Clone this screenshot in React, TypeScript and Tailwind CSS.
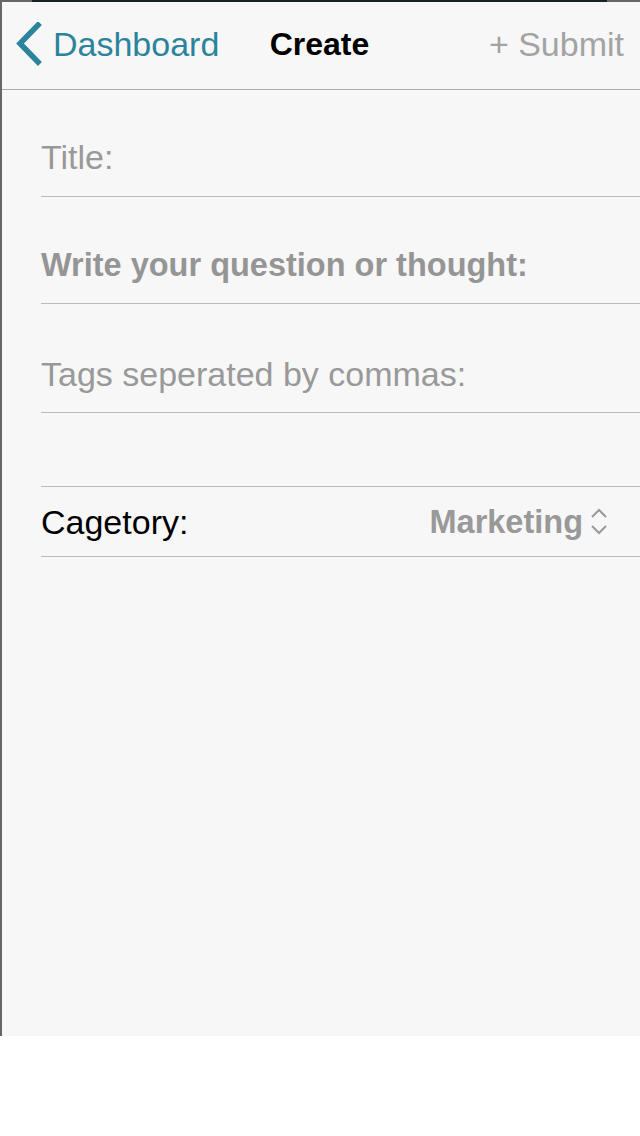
import { Fragment } from 'react';

const font = { fontFamily: '"Liberation Sans", Arial, sans-serif' };

function BackChevron() {
    return (
        <svg width="28" height="44" viewBox="0 0 28 44" className="shrink-0">
            <polyline points="23,3 5,21.5 23,40" fill="none" stroke="#2b849b" strokeWidth="5.5" strokeLinecap="square" />
        </svg>
    );
}

function UpDown() {
    return (
        <svg width="18" height="30" viewBox="0 0 18 30" className="ml-[7px] shrink-0">
            <polyline points="2,10 9,3 16,10" fill="none" stroke="#999" strokeWidth="2" />
            <polyline points="2,19 9,26 16,19" fill="none" stroke="#999" strokeWidth="2" />
        </svg>
    );
}

export default function App() {
    const fields = [
        { label: 'Title:', bold: false, h: 'h-[107px]', pb: 'pb-[19px]' },
        { label: 'Write your question or thought:', bold: true, h: 'h-[107px]', pb: 'pb-[18px]' },
        { label: 'Tags seperated by commas:', bold: false, h: 'h-[109px]', pb: 'pb-[18px]' },
    ];

    return (
        <div className="w-full h-[1136px] bg-white" style={font}>
            <div className="h-[1036px] bg-[#f7f7f7] border-l-2 border-[#666] flex flex-col">
                <div className="flex h-[2px] shrink-0">
                    <div className="w-[30px] bg-[#666]" />
                    <div className="flex-1 bg-[#16242a]" />
                    <div className="w-[33px] bg-[#666]" />
                </div>

                <div className="h-[88px] shrink-0 flex items-center border-b border-[#ababab] pb-[3px]">
                    <div className="flex-1 flex items-center pl-[13px]">
                        <BackChevron />
                        <span className="ml-[10px] text-[34px] leading-[40px] text-[#2b849b]">Dashboard</span>
                    </div>
                    <span className="text-[32px] leading-[40px] font-bold text-black">Create</span>
                    <div className="flex-1 flex justify-end pr-[16px]">
                        <span className="text-[34px] leading-[40px] text-[#a3a3a3]">+ Submit</span>
                    </div>
                </div>

                <div className="pl-[39px] flex flex-col">
                    {fields.map((f) => (
                        <Fragment key={f.label}>
                            <div className={`${f.h} ${f.pb} flex items-end border-b border-[#bcbcbc]`}>
                                <span
                                    className={
                                        f.bold
                                            ? 'text-[32.5px] leading-[40px] font-bold text-[#959595]'
                                            : 'text-[34px] leading-[40px] text-[#999]'
                                    }
                                >
                                    {f.label}
                                </span>
                            </div>
                        </Fragment>
                    ))}
                    <div className="h-[74px] border-b border-[#bcbcbc]" />
                    <div className="h-[70px] flex items-center justify-between border-b border-[#bcbcbc] pr-[32px]">
                        <span className="text-[34px] leading-[40px] text-black">Cagetory:</span>
                        <div className="flex items-center">
                            <span className="text-[32.5px] leading-[40px] font-bold text-[#999]">Marketing</span>
                            <UpDown />
                        </div>
                    </div>
                </div>
            </div>
        </div>
    );
}
